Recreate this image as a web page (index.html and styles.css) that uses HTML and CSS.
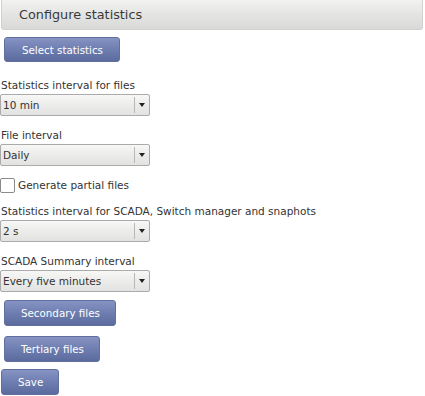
FILE: index.html
```html
<!DOCTYPE html>
<html lang="en">
<head>
	<title>Configure statistics</title>
	<link rel="stylesheet" href="styles.css">
</head>
<body>
	<div class="panel">
		<h1 class="panel-title">Configure statistics</h1>
		<button class="btn btn-select">Select statistics</button>

		<div class="field">
			<label>Statistics interval for files</label>
			<div class="select"><span class="value">10 min</span><span class="arrow"></span></div>
		</div>
		<div class="field">
			<label>File interval</label>
			<div class="select"><span class="value">Daily</span><span class="arrow"></span></div>
		</div>
		<div class="check-row">
			<span class="checkbox"></span>
			<span class="check-label">Generate partial files</span>
		</div>
		<div class="field field-after-check">
			<label>Statistics interval for SCADA, Switch manager and snaphots</label>
			<div class="select"><span class="value">2 s</span><span class="arrow"></span></div>
		</div>
		<div class="field">
			<label>SCADA Summary interval</label>
			<div class="select"><span class="value">Every five minutes</span><span class="arrow"></span></div>
		</div>

		<button class="btn btn-secondary">Secondary files</button>
		<button class="btn btn-tertiary">Tertiary files</button>
		<button class="btn btn-save">Save</button>
	</div>
</body>
</html>
```

FILE: styles.css
```css
body {
	margin: 0;
	font-family: "DejaVu Sans", Verdana, sans-serif;
	font-size: 10.5px;
	color: #333;
	background: #fff;
}
.panel {
	width: 425px;
}
.panel-title {
	margin: 0 2px 0 1px;
	height: 29px;
	line-height: 29px;
	padding-left: 17px;
	font-size: 12.8px;
	font-weight: normal;
	color: #3a3a3a;
	background: linear-gradient(#f2f2f0, #e4e4e2 50%, #d9d9d7);
	border: 1px solid #d2d2d0;
	border-top: none;
	border-radius: 0 0 3px 3px;
}
.btn {
	display: block;
	height: 26px;
	padding: 0 15px 0 16px;
	font-family: "DejaVu Sans", Verdana, sans-serif;
	font-size: 10.3px;
	color: #fff;
	background: linear-gradient(#8693c3, #6e7eb0 50%, #5b6b9d);
	border: 1px solid #5f6f9f;
	border-radius: 3px;
	cursor: pointer;
}
.btn-select {
	margin: 7px 0 0 4px;
	height: 25px;
	padding: 0 16px 0 17px;
}
.btn-secondary {
	margin: 8px 0 0 4px;
}
.btn-tertiary {
	margin: 10px 0 0 4px;
}
.btn-save {
	margin: 7px 0 0 1px;
}
.field {
	margin-top: 12px;
}
.field:first-of-type {
	margin-top: 16px;
}
.field-after-check {
	margin-top: 11px;
}
.field label {
	display: block;
	line-height: 14px;
	margin-left: 1px;
}
.select {
	display: flex;
	align-items: stretch;
	width: 148px;
	height: 20px;
	margin-top: 2px;
	border: 1px solid #ababab;
	border-radius: 2px;
	background: linear-gradient(#f7f7f5, #ececea 50%, #e2e2e0);
}
.select .value {
	flex: 1;
	line-height: 20px;
	padding-left: 2px;
	color: #333;
}
.select .arrow {
	position: relative;
	width: 14px;
	margin: 2px 0;
	border-left: 1px solid #b8b8b8;
}
.select .arrow::after {
	content: "";
	position: absolute;
	left: 4px;
	top: 6px;
	border-left: 3.5px solid transparent;
	border-right: 3.5px solid transparent;
	border-top: 4px solid #222;
}
.check-row {
	display: flex;
	align-items: center;
	margin-top: 12px;
	height: 15px;
}
.checkbox {
	width: 13px;
	height: 13px;
	border: 1px solid #8a8a8a;
	border-radius: 2px;
	background: #fff;
}
.check-label {
	margin-left: 3px;
	line-height: 15px;
}
```
